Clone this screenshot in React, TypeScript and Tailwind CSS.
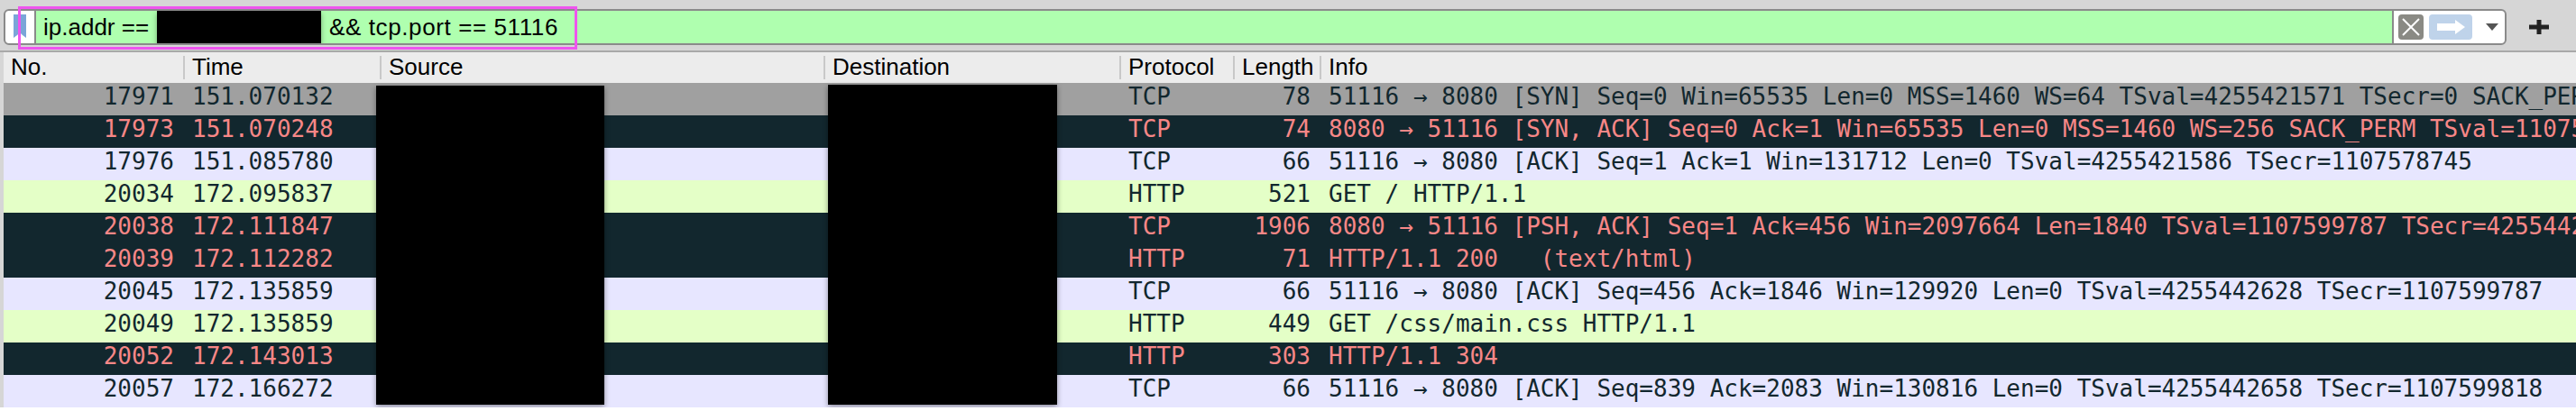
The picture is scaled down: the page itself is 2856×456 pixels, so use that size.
const sans = "font-['Liberation_Sans',Arial,sans-serif]";

type Kind = "syn" | "bad" | "tcp" | "http";

const rowStyles: Record<Kind, string> = {
  syn: "bg-[#a0a0a0] text-[#12272e]",
  bad: "bg-[#12272e] text-[#f78787]",
  tcp: "bg-[#e7e6ff] text-[#12272e]",
  http: "bg-[#e4ffc7] text-[#12272e]",
};

const packets: { no: string; time: string; proto: string; len: string; info: string; kind: Kind }[] = [
  { no: "17971", time: "151.070132", proto: "TCP", len: "78", kind: "syn", info: "51116 → 8080 [SYN] Seq=0 Win=65535 Len=0 MSS=1460 WS=64 TSval=4255421571 TSecr=0 SACK_PERM" },
  { no: "17973", time: "151.070248", proto: "TCP", len: "74", kind: "bad", info: "8080 → 51116 [SYN, ACK] Seq=0 Ack=1 Win=65535 Len=0 MSS=1460 WS=256 SACK_PERM TSval=1107578745 TSecr=4255421571" },
  { no: "17976", time: "151.085780", proto: "TCP", len: "66", kind: "tcp", info: "51116 → 8080 [ACK] Seq=1 Ack=1 Win=131712 Len=0 TSval=4255421586 TSecr=1107578745" },
  { no: "20034", time: "172.095837", proto: "HTTP", len: "521", kind: "http", info: "GET / HTTP/1.1" },
  { no: "20038", time: "172.111847", proto: "TCP", len: "1906", kind: "bad", info: "8080 → 51116 [PSH, ACK] Seq=1 Ack=456 Win=2097664 Len=1840 TSval=1107599787 TSecr=4255442604" },
  { no: "20039", time: "172.112282", proto: "HTTP", len: "71", kind: "bad", info: "HTTP/1.1 200   (text/html)" },
  { no: "20045", time: "172.135859", proto: "TCP", len: "66", kind: "tcp", info: "51116 → 8080 [ACK] Seq=456 Ack=1846 Win=129920 Len=0 TSval=4255442628 TSecr=1107599787" },
  { no: "20049", time: "172.135859", proto: "HTTP", len: "449", kind: "http", info: "GET /css/main.css HTTP/1.1" },
  { no: "20052", time: "172.143013", proto: "HTTP", len: "303", kind: "bad", info: "HTTP/1.1 304" },
  { no: "20057", time: "172.166272", proto: "TCP", len: "66", kind: "tcp", info: "51116 → 8080 [ACK] Seq=839 Ack=2083 Win=130816 Len=0 TSval=4255442658 TSecr=1107599818" },
];

const columns = "grid grid-cols-[199px_218px_492px_328px_126px_96px_1fr]";

const headers = ["No.", "Time", "Source", "Destination", "Protocol", "Length", "Info"];

function Bookmark() {
  return (
    <svg width="16" height="28" viewBox="0 0 16 28" className="ml-[8px] shrink-0">
      <path d="M1 0H15V26L11 23L8 20L5 23L1 26Z" fill="#7ba5d8" />
    </svg>
  );
}

function ClearIcon() {
  return (
    <div className="flex h-[28px] w-[28px] items-center justify-center rounded-[4px] bg-[#8a8a84]">
      <svg width="20" height="20" viewBox="0 0 20 20">
        <path d="M1 1L19 19M19 1L1 19" stroke="#fff" strokeWidth="2" />
      </svg>
    </div>
  );
}

function ApplyIcon() {
  return (
    <div className="ml-[6px] flex h-[28px] w-[48px] items-center justify-center rounded-[4px] bg-[#bfd3ea]">
      <svg width="32" height="16" viewBox="0 0 32 16">
        <path d="M1 4H21V0L32 8L21 16V12H1Z" fill="#fff" />
      </svg>
    </div>
  );
}

function FilterBar() {
  return (
    <div className="relative flex h-[58px] items-start border-b-2 border-[#a9a9a9] bg-[#d6d6d6] pt-[10px]">
      <div className="ml-[4px] flex h-[40px] w-[2775px] items-stretch overflow-hidden rounded-[6px] border-2 border-[#8a8a8a] bg-white">
        <div className="flex w-[34px] shrink-0 items-center border-r-2 border-[#8a8a8a]">
          <Bookmark />
        </div>
        <div className={`flex flex-1 items-center bg-[#afffaf] pl-[8px] text-[26px] text-black ${sans}`}>
          <span>ip.addr ==</span>
          <span className="ml-[9px] mr-[9px] h-[36px] w-[182px] bg-black shadow-[0_3px_6px_rgba(0,0,0,0.35)]" />
          <span className="tracking-[0.6px]">&amp;&amp; tcp.port == 51116</span>
        </div>
        <div className="flex w-[125px] shrink-0 items-center border-l-2 border-[#8a8a8a] pl-[5px]">
          <ClearIcon />
          <ApplyIcon />
          <svg width="14" height="8" viewBox="0 0 14 8" className="ml-[15px]">
            <path d="M0 0H14L7 8Z" fill="#555" />
          </svg>
        </div>
      </div>
      <svg width="22" height="16" viewBox="0 0 22 16" className="ml-[25px] mt-[12px]">
        <path d="M8.5 0H13.5V5.5H22V10.5H13.5V16H8.5V10.5H0V5.5H8.5Z" fill="#222" />
      </svg>
      {/* annotation box drawn on top of the screenshot */}
      <div className="absolute left-[20px] top-[7px] h-[48px] w-[620px] border-[3px] border-[#ee55ee]" />
    </div>
  );
}

function PacketList() {
  return (
    <div className="relative ml-[4px] overflow-hidden">
      <div className={`${columns} h-[34px] items-center bg-[#ececec] pb-[1px] text-[26px] text-black ${sans}`}>
        {headers.map((h, i) => (
          <div
            key={h}
            className={`flex h-[26px] items-center ${i === 0 ? "pl-[8px]" : "border-l-2 border-[#c8c8c8] pl-[8px]"}`}
          >
            {h}
          </div>
        ))}
      </div>
      {packets.map((p) => (
        <div
          key={p.no}
          className={`${columns} h-[36px] whitespace-pre pb-[6px] font-['DejaVu_Sans_Mono',monospace] text-[26px] leading-[30px] ${rowStyles[p.kind]}`}
        >
          <div className="pr-[10px] text-right">{p.no}</div>
          <div className="pl-[10px]">{p.time}</div>
          <div />
          <div />
          <div className="pl-[10px]">{p.proto}</div>
          <div className="pr-[10px] text-right">{p.len}</div>
          <div className="overflow-hidden pl-[10px]">{p.info}</div>
        </div>
      ))}
      {/* redacted address columns */}
      <div className="absolute left-[413px] top-[37px] h-[354px] w-[253px] bg-black shadow-[0_2px_6px_rgba(0,0,0,0.4)]" />
      <div className="absolute left-[914px] top-[36px] h-[355px] w-[254px] bg-black shadow-[0_2px_6px_rgba(0,0,0,0.4)]" />
    </div>
  );
}

export default function App() {
  return (
    <div className="h-[456px] w-[2856px] overflow-hidden bg-white">
      <FilterBar />
      <div className="relative">
        <div className="absolute left-0 top-0 h-full w-[4px] bg-[#d6d6d6]" />
        <PacketList />
      </div>
    </div>
  );
}
